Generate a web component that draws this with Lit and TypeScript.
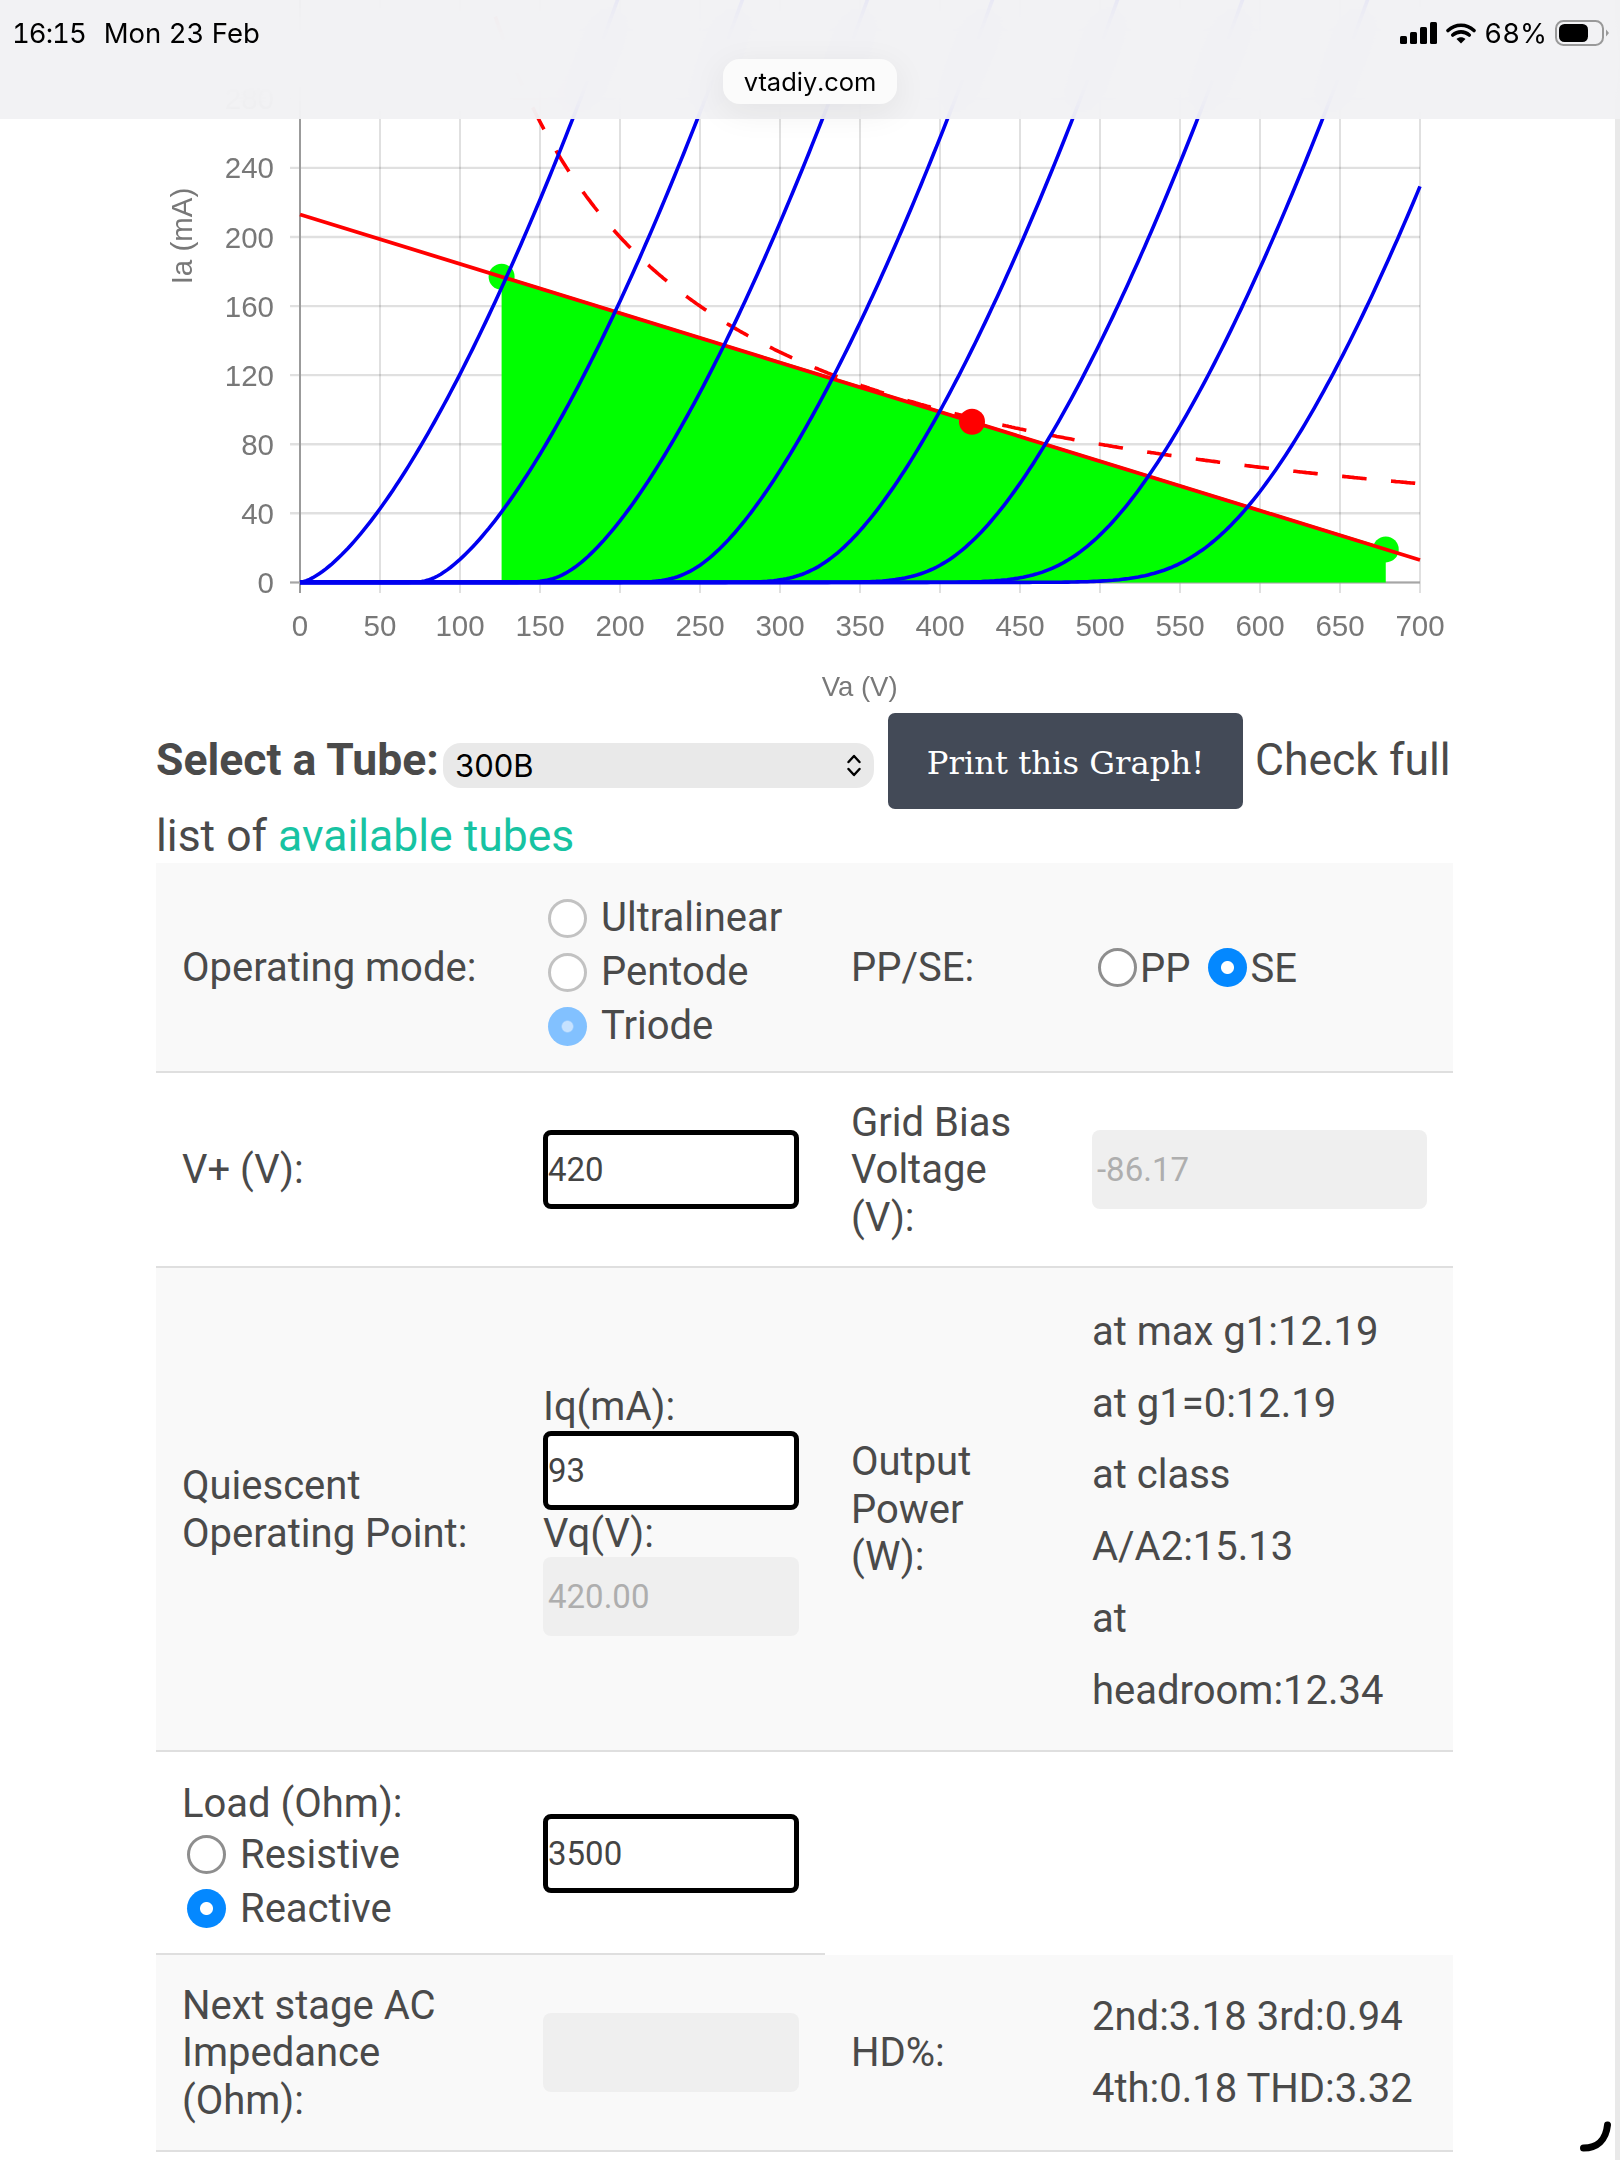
import { LitElement, html, css, svg } from "lit";
import { customElement } from "lit/decorators.js";

const px = (v: number) => 300 + 1.6 * v;
const py = (i: number) => 582.4 - 1.727 * i;

function koren(v: number, vg: number): number {
  const mu = 3.908, kp = 80, kvb = 300, ex = 1.5, kg1 = 1073;
  if (v <= 0) return 0;
  const e1 = (v / kp) * Math.log(1 + Math.exp(kp * (1 / mu + vg / Math.sqrt(kvb + v * v))));
  return (1000 * Math.pow(e1, ex)) / kg1;
}

function curve(vg: number): string {
  const pts: string[] = [];
  for (let v = 0; v <= 700; v += 2) {
    pts.push(`${px(v).toFixed(1)},${py(koren(v, vg)).toFixed(1)}`);
  }
  return pts.join(" ");
}

const powerPoints = (from: number, to: number) => {
  const pts: [number, number][] = [];
  for (let v = from; v <= to + 0.01; v += 1) pts.push([px(v), py(40000 / v)]);
  return pts;
};
const pathLength = (pts: [number, number][]) =>
  pts.slice(1).reduce((sum, p, i) => sum + Math.hypot(p[0] - pts[i][0], p[1] - pts[i][1]), 0);

const START_V = 116;
const lead = pathLength(powerPoints(START_V, 160));
const span = pathLength(powerPoints(160, 682));
const period = span / Math.round(span / 49.3);
const dashOffset = -lead;
const powerLine = powerPoints(START_V, 697).map((p) => `${p[0].toFixed(1)},${p[1].toFixed(1)}`).join(" ");

const load = (v: number) => 213 - v / 3.5;

@customElement("app-root")
export class AppRoot extends LitElement {
  static styles = css`
    :host {
      display: block;
      position: relative;
      width: 1620px;
      height: 2160px;
      overflow: hidden;
      background: #fff;
      font-family: Roboto, "Liberation Sans", sans-serif;
      font-size: 40px;
      line-height: 47.5px;
      color: #4a4a4a;
    }
    .chart { display: block; width: 1620px; height: 713px; filter: blur(0.5px); }
    .tick { font: 29.5px "Liberation Sans", Arial, sans-serif; fill: #787878; }
    .title-x { font: 27.5px "Liberation Sans", Arial, sans-serif; fill: #787878; }
    .title-y { font: 29.5px "Liberation Sans", Arial, sans-serif; fill: #787878; }

    .status {
      position: absolute; top: 0; left: 0; right: 0; height: 119px;
      background: rgba(241, 241, 243, 0.93);
      -webkit-backdrop-filter: blur(22px);
      backdrop-filter: blur(22px);
      font-family: Inter, "Liberation Sans", sans-serif;
      font-variant-numeric: tabular-nums;
      color: #000;
    }
    .status-row {
      display: flex; align-items: center; height: 28px; padding: 19px 10px 0 12px;
      font-size: 27.5px; line-height: 28px;
    }
    .time { letter-spacing: -1px; }
    .date { margin-left: 18px; }
    .signal { display: block; width: 37px; height: 22px; margin-left: auto; }
    .wifi { display: block; width: 30px; height: 22px; margin-left: 9px; }
    .pct { margin-left: 8px; }
    .battery { display: block; width: 55px; height: 26px; margin-left: 8px; }
    .url {
      position: absolute; left: 723px; top: 59px; width: 174px; height: 45px;
      display: flex; align-items: center; justify-content: center;
      background: #fbfbfb; border-radius: 17px; font-size: 25.500px; line-height: 45px;
      box-shadow: 0 8px 34px rgba(0, 0, 0, 0.07);
    }

    .page { width: 1297px; margin-left: 156px; }
    .tube-row { display: flex; align-items: center; height: 96px; font-size: 44.500px; }
    .tube-label { font-weight: 700; width: 287px; white-space: nowrap; }
    .select-wrap { position: relative; width: 431px; height: 45px; margin-top: 9px; }
    .select-wrap select {
      appearance: none; -webkit-appearance: none; display: block; width: 100%; height: 100%;
      border: 0; margin: 0; border-radius: 18px; background: #e9e9e9; color: #000;
      font: 31px/45px Inter, "Liberation Sans", sans-serif; padding: 0 0 0 12px;
    }
    .select-wrap svg { position: absolute; right: 12px; top: 10px; width: 16px; height: 25px; }
    .print {
      width: 355px; height: 96px; margin-left: 14px; border: 0; border-radius: 7px; padding: 4px 0 0;
      background: #434a57; color: #fff; font: 32.300px/92px "DejaVu Serif", serif;
    }
    .check { margin-left: 12px; white-space: nowrap; }
    .tube-line { margin-top: 2px; height: 52px; line-height: 50px; font-size: 44.500px; }
    .tube-line a { color: #17c3a2; text-decoration: none; }

    .row { display: grid; grid-template-columns: 361px 308px 241px 387px; }
    .row.shade { background: #f9f9f9; }
    .cell {
      display: flex; flex-direction: column; justify-content: center; align-items: flex-start;
      padding: 26px 26px 25px; border-bottom: 2.500px solid #dfdfdf; box-sizing: border-box;
      min-width: 0;
    }
    .cell.radios { padding-top: 28px; padding-bottom: 17.500px; }
    .tall { line-height: 71.700px; white-space: nowrap; padding-top: 28px; padding-bottom: 24px; }
    .tall.hd { padding-top: 26px; padding-bottom: 25px; }
    .radio-line { display: flex; align-items: center; height: 54px; white-space: nowrap; }
    input[type="text"] {
      display: block; box-sizing: border-box; width: 256px; height: 79px; margin: 0;
      padding: 0; border: 5px solid #000; border-radius: 8px; background: #fff;
      color: #444; font: 33px Roboto, sans-serif; outline: none;
    }
    .wide input[type="text"] { width: 335px; }
    input[type="text"]:disabled { border: 0; padding: 0 5px; background: #efefef; color: #aeaeae; }
    input[type="radio"] {
      appearance: none; -webkit-appearance: none; box-sizing: border-box; flex: none;
      width: 39px; height: 39px; margin: 0 14px 0 5px; border-radius: 50%;
      border: 3.800px solid #8e8e8e; background: #fff;
    }
    input[type="radio"]:disabled { border-color: #c2c2c2; }
    input[type="radio"]:checked {
      border: 0; background: radial-gradient(circle, #fff 0 6px, #0488ff 7px);
    }
    input[type="radio"]:checked:disabled {
      background: radial-gradient(circle, #c6e2ff 0 5px, #82c1ff 6.500px);
    }
    .pp { display: flex; align-items: center; }
    .pp input[type="radio"] { margin-right: 3px; margin-left: 6px; }
    .pp span { margin-right: 12px; margin-top: 2px; }

    .home { position: absolute; left: 1575px; top: 2118px; width: 40px; height: 36px; }
    .edge { position: absolute; right: 0; top: 0; width: 5px; height: 2160px; background: #e9e9e9; }
  `;

  private chart() {
    const vs = Array.from({ length: 15 }, (_, i) => i * 50);
    const is = Array.from({ length: 9 }, (_, i) => i * 40);
    const labels = is.slice(0, 8);
    const vgs = [0, -20, -40, -60, -80, -100, -120, -140];
    const la = 126;
    const ra = 678.6;
    return svg`
      <svg class="chart" viewBox="0 0 1620 713" xmlns="http://www.w3.org/2000/svg">
        ${vs.map((v) => svg`<line x1=${px(v)} x2=${px(v)} y1="0" y2="593" stroke="#000" stroke-opacity="0.12" stroke-width="2"/>`)}
        ${is.map((i) => svg`<line x1="290" x2=${px(700)} y1=${py(i)} y2=${py(i)} stroke="#000" stroke-opacity="0.12" stroke-width="2.4"/>`)}
        <line x1="300" x2="300" y1="0" y2="593" stroke="#9b9b9b" stroke-width="2"/>
        <line x1="290" x2=${px(700)} y1=${py(0)} y2=${py(0)} stroke="#a6a6a6" stroke-width="2"/>
        <polygon fill="#00ff00"
          points="${px(la)},${py(load(la)) - 1.6} ${px(ra)},${py(load(ra)) - 1.6} ${px(ra)},${py(0)} ${px(la)},${py(0)}"/>
        <circle cx=${px(la)} cy=${py(load(la))} r="13" fill="#00ff00"/>
        <circle cx=${px(ra)} cy=${py(load(ra))} r="13" fill="#00ff00"/>
        <polyline points=${powerLine} fill="none" stroke="#ff0000" stroke-width="3.6"
          stroke-dasharray="${24.6} ${period - 24.6}" stroke-dashoffset=${dashOffset}/>
        <line x1=${px(0)} y1=${py(load(0))} x2=${px(700)} y2=${py(load(700))} stroke="#ff0000" stroke-width="3.8"/>
        ${vgs.map((g) => svg`<polyline points=${curve(g)} fill="none" stroke="#0000f0" stroke-width="3.6"/>`)}
        <circle cx=${px(420)} cy=${py(93)} r="13" fill="#ff0000"/>
        ${labels.map((i) => svg`<text class="tick" x="274" y=${py(i) + 10.5} text-anchor="end">${i}</text>`)}
        ${vs.map((v) => svg`<text class="tick" x=${px(v)} y="636" text-anchor="middle">${v}</text>`)}
        <text class="title-x" x="859.6" y="696" text-anchor="middle">Va (V)</text>
        <text class="title-y" text-anchor="middle" transform="translate(192 236) rotate(-90)">Ia (mA)</text>
      </svg>
    `;
  }

  render() {
    return html`
      ${this.chart()}
      <div class="page">
        <div class="tube-row">
          <span class="tube-label">Select a Tube:</span>
          <div class="select-wrap">
            <select><option>300B</option></select>
            <svg viewBox="0 0 16 25"><path d="M2.500 9 8 3l5.500 6M2.500 16 8 22l5.500-6" fill="none" stroke="#000" stroke-width="2.400" stroke-linecap="round" stroke-linejoin="round"/></svg>
          </div>
          <button class="print">Print this Graph!</button>
          <span class="check">Check full</span>
        </div>
        <div class="tube-line">list of <a href="#">available tubes</a></div>

        <div class="row shade">
          <div class="cell">Operating mode:</div>
          <div class="cell radios">
            <label class="radio-line"><input type="radio" disabled />Ultralinear</label>
            <label class="radio-line"><input type="radio" disabled />Pentode</label>
            <label class="radio-line"><input type="radio" disabled checked />Triode</label>
          </div>
          <div class="cell">PP/SE:</div>
          <div class="cell">
            <div class="pp">
              <input type="radio" name="pp" /><span>PP</span>
              <input type="radio" name="pp" checked /><span>SE</span>
            </div>
          </div>
        </div>

        <div class="row">
          <div class="cell">V+ (V):</div>
          <div class="cell"><input type="text" value="420" /></div>
          <div class="cell">Grid Bias Voltage (V):</div>
          <div class="cell wide"><input type="text" value="-86.17" disabled /></div>
        </div>

        <div class="row shade">
          <div class="cell">Quiescent Operating Point:</div>
          <div class="cell">
            <div>Iq(mA):</div>
            <input type="text" value="93" />
            <div>Vq(V):</div>
            <input type="text" value="420.00" disabled />
          </div>
          <div class="cell">Output Power (W):</div>
          <div class="cell tall">
            <div>at max g1:12.19</div>
            <div>at g1=0:12.19</div>
            <div>at class</div>
            <div>A/A2:15.13</div>
            <div>at</div>
            <div>headroom:12.34</div>
          </div>
        </div>

        <div class="row">
          <div class="cell radios">
            <div>Load (Ohm):</div>
            <label class="radio-line"><input type="radio" name="load" />Resistive</label>
            <label class="radio-line"><input type="radio" name="load" checked />Reactive</label>
          </div>
          <div class="cell"><input type="text" value="3500" /></div>
        </div>

        <div class="row shade">
          <div class="cell">Next stage AC Impedance (Ohm):</div>
          <div class="cell"><input type="text" disabled /></div>
          <div class="cell">HD%:</div>
          <div class="cell tall hd">
            <div>2nd:3.18 3rd:0.94</div>
            <div>4th:0.18 THD:3.32</div>
          </div>
        </div>
      </div>

      <div class="edge"></div>
      <div class="status">
        <div class="status-row">
          <span class="time">16:15</span>
          <span class="date">Mon 23 Feb</span>
          <svg class="signal" viewBox="0 0 37 22">
            <rect x="0" y="14" width="7" height="8" rx="1.500" fill="#000"/>
            <rect x="10" y="10" width="7" height="12" rx="1.500" fill="#000"/>
            <rect x="20" y="5" width="7" height="17" rx="1.500" fill="#000"/>
            <rect x="30" y="0" width="7" height="22" rx="1.500" fill="#000"/>
          </svg>
          <svg class="wifi" viewBox="0 0 30 22">
            <path d="M2 8.500C9.500 1.500 20.500 1.500 28 8.500M6.800 13C11.500 8.800 18.500 8.800 23.200 13" fill="none" stroke="#000" stroke-width="3.600" stroke-linecap="round"/>
            <path d="M10.500 17C13 14.700 17 14.700 19.500 17L15 21.500Z" fill="#000"/>
          </svg>
          <span class="pct">68%</span>
          <svg class="battery" viewBox="0 0 55 26">
            <rect x="1" y="1" width="47" height="24" rx="7.500" fill="none" stroke="#999" stroke-width="2"/>
            <rect x="4" y="4" width="29" height="18" rx="5.500" fill="#000"/>
            <path d="M51 9.500 54 13 51 16.500Z" fill="#999"/>
          </svg>
        </div>
        <div class="url">vtadiy.com</div>
      </div>

      <svg class="home" viewBox="0 0 40 36">
        <path d="M8.500 30C22 30 31 22 32.500 7" fill="none" stroke="#000" stroke-width="7" stroke-linecap="round"/>
      </svg>
    `;
  }
}
